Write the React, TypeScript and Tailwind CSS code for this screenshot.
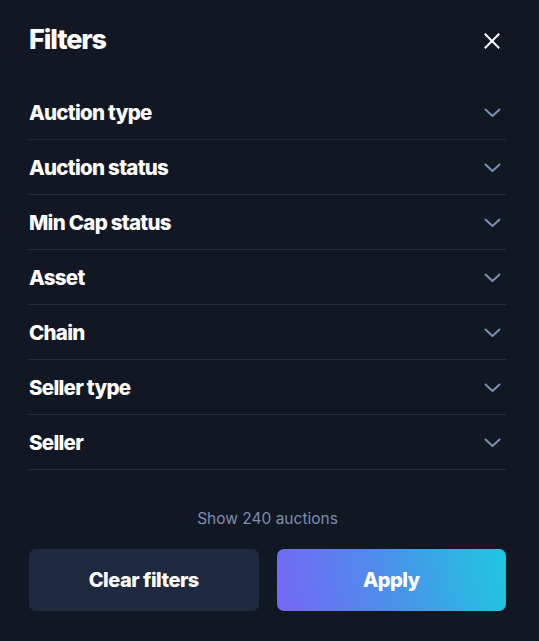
import React from 'react';

const filters = [
	'Auction type',
	'Auction status',
	'Min Cap status',
	'Asset',
	'Chain',
	'Seller type',
	'Seller',
];

const Chevron = () => (
	<svg width="17" height="10" viewBox="0 0 17 10" fill="none" stroke="#7d90b4" strokeWidth="2" strokeLinecap="round" strokeLinejoin="round">
		<path d="M1.5 1.5l7 6.5 7-6.5" />
	</svg>
);

const CloseIcon = () => (
	<svg width="16" height="16" viewBox="0 0 16 16" fill="none" stroke="#ffffff" strokeWidth="2" strokeLinecap="square">
		<path d="M1.5 1.5l13 13M14.5 1.5l-13 13" />
	</svg>
);

const FilterRow = ({ label }: { label: string }) => (
	<div className="flex h-[55px] items-center justify-between border-b border-[#272d39]">
		<span className="pt-[2px] text-[20.5px] font-extrabold tracking-[-0.035em] text-white">{label}</span>
		<span className="pr-[5px] pt-[1px]">
			<Chevron />
		</span>
	</div>
);

export default function App() {
	return (
		<div
			className="flex min-h-[641px] w-[539px] flex-col bg-[#111723] pl-[29px] pr-[33px] pb-[30px] text-white"
			style={{ fontFamily: 'Inter, "Liberation Sans", sans-serif' }}
		>
			<div className="flex h-[85px] items-center justify-between pb-[4px]">
				<h1 className="text-[27px] font-extrabold tracking-[-0.04em]">Filters</h1>
				<button className="mr-[6px] flex items-center justify-center">
					<CloseIcon />
				</button>
			</div>

			<div className="flex flex-col">
				{filters.map((f) => (
					<FilterRow key={f} label={f} />
				))}
			</div>

			<div className="mt-[37px] text-center text-[15.5px] text-[#7d8db0]">Show 240 auctions</div>

			<div className="mt-[19px] grid grid-cols-2 gap-[18px]">
				<button className="h-[62px] rounded-[7px] bg-[#1e293f] text-[20px] font-extrabold tracking-[-0.025em] text-white">
					Clear filters
				</button>
				<button className="h-[62px] rounded-[7px] bg-[linear-gradient(78deg,#7666f5_0%,#4f8ceb_45%,#1ec8de_100%)] text-[20px] font-extrabold tracking-[-0.025em] text-white">
					Apply
				</button>
			</div>
		</div>
	);
}
